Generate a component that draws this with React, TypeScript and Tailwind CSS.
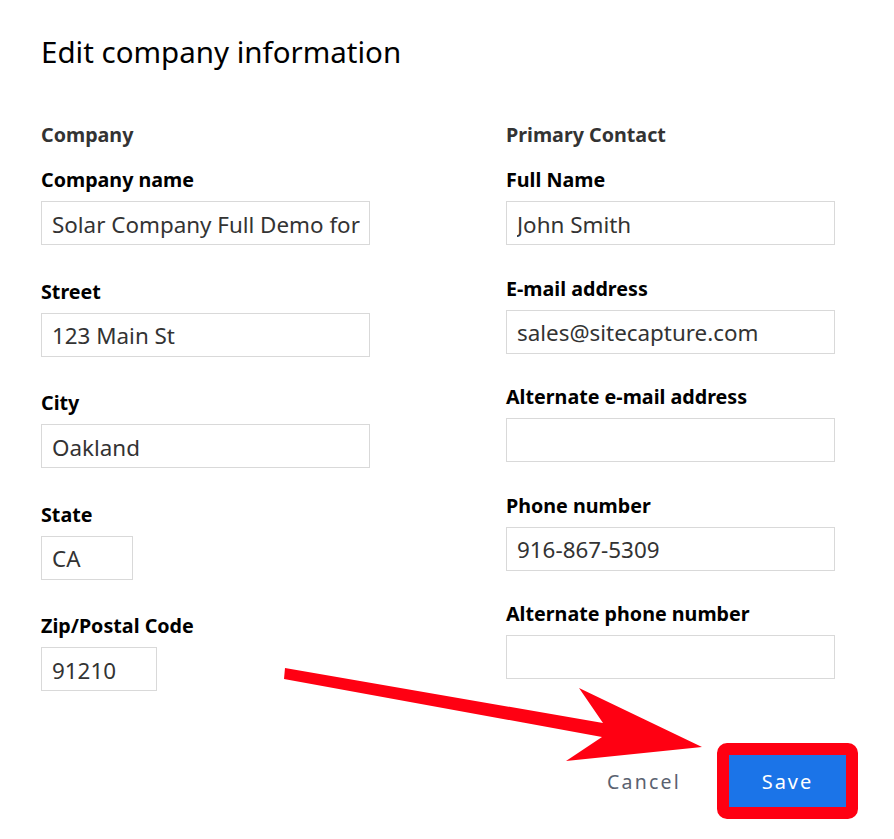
import React from "react";

const font = { fontFamily: '"Noto Sans", "Open Sans", sans-serif' };

function Field({ label, value, width, mb }: { label: string; value: string; width: string; mb: string }) {
  return (
    <div className={mb}>
      <div className="text-[19.7px] leading-[24px] font-bold text-black mb-[9px]">{label}</div>
      <div className={`${width} h-[44px] border border-[#d9d9d9] flex items-center pl-[10px] pr-[9px] pt-[3px]`}>
        <div className="overflow-hidden whitespace-nowrap text-[22.4px] leading-[30px] text-[#333333] w-full">{value}</div>
      </div>
    </div>
  );
}

export default function App() {
  return (
    <div className="relative w-[894px] h-[839px] bg-white overflow-hidden" style={font}>
      <div className="pl-[41px] pt-[34px]">
        <h1 className="text-[29.5px] leading-[36px] font-normal text-black">Edit company information</h1>
        <div className="mt-[53px] flex gap-x-[136px]">
          <div className="w-[329px] flex flex-col">
            <div className="text-[19.7px] leading-[24px] font-bold text-[#333333] mb-[21px]">Company</div>
            <Field label="Company name" value="Solar Company Full Demo for Training" width="w-[329px]" mb="mb-[34.5px]" />
            <Field label="Street" value="123 Main St" width="w-[329px]" mb="mb-[34.5px]" />
            <Field label="City" value="Oakland" width="w-[329px]" mb="mb-[34.5px]" />
            <Field label="State" value="CA" width="w-[92px]" mb="mb-[34.5px]" />
            <Field label="Zip/Postal Code" value="91210" width="w-[116px]" mb="mb-0" />
          </div>
          <div className="w-[329px] flex flex-col">
            <div className="text-[19.7px] leading-[24px] font-bold text-[#333333] mb-[21px]">Primary Contact</div>
            <Field label="Full Name" value="John Smith" width="w-[329px]" mb="mb-[31.5px]" />
            <Field label="E-mail address" value="sales@sitecapture.com" width="w-[329px]" mb="mb-[31.5px]" />
            <Field label="Alternate e-mail address" value="" width="w-[329px]" mb="mb-[31.5px]" />
            <Field label="Phone number" value="916-867-5309" width="w-[329px]" mb="mb-[31.5px]" />
            <Field label="Alternate phone number" value="" width="w-[329px]" mb="mb-0" />
          </div>
        </div>
      </div>
      <div className="mt-[52px] flex justify-end items-center pr-[36px]">
        <button className="text-[19.5px] tracking-[2.2px] text-[#5a6270] mr-[36px] pt-[2px]">Cancel</button>
        <div className="border-[12px] border-[#ff0012] rounded-[10px]">
          <button className="w-[117px] h-[52px] bg-[#1b74e8] text-white text-[20px] tracking-[2px] flex items-center justify-center pt-[2px]">
            Save
          </button>
        </div>
      </div>
      <svg className="absolute left-0 top-0 pointer-events-none" width="894" height="839" viewBox="0 0 894 839">
        <polygon
          points="285,668 603,723 579,688 702,747 566,761 602,737 284,679"
          fill="#ff0012"
        />
      </svg>
    </div>
  );
}
